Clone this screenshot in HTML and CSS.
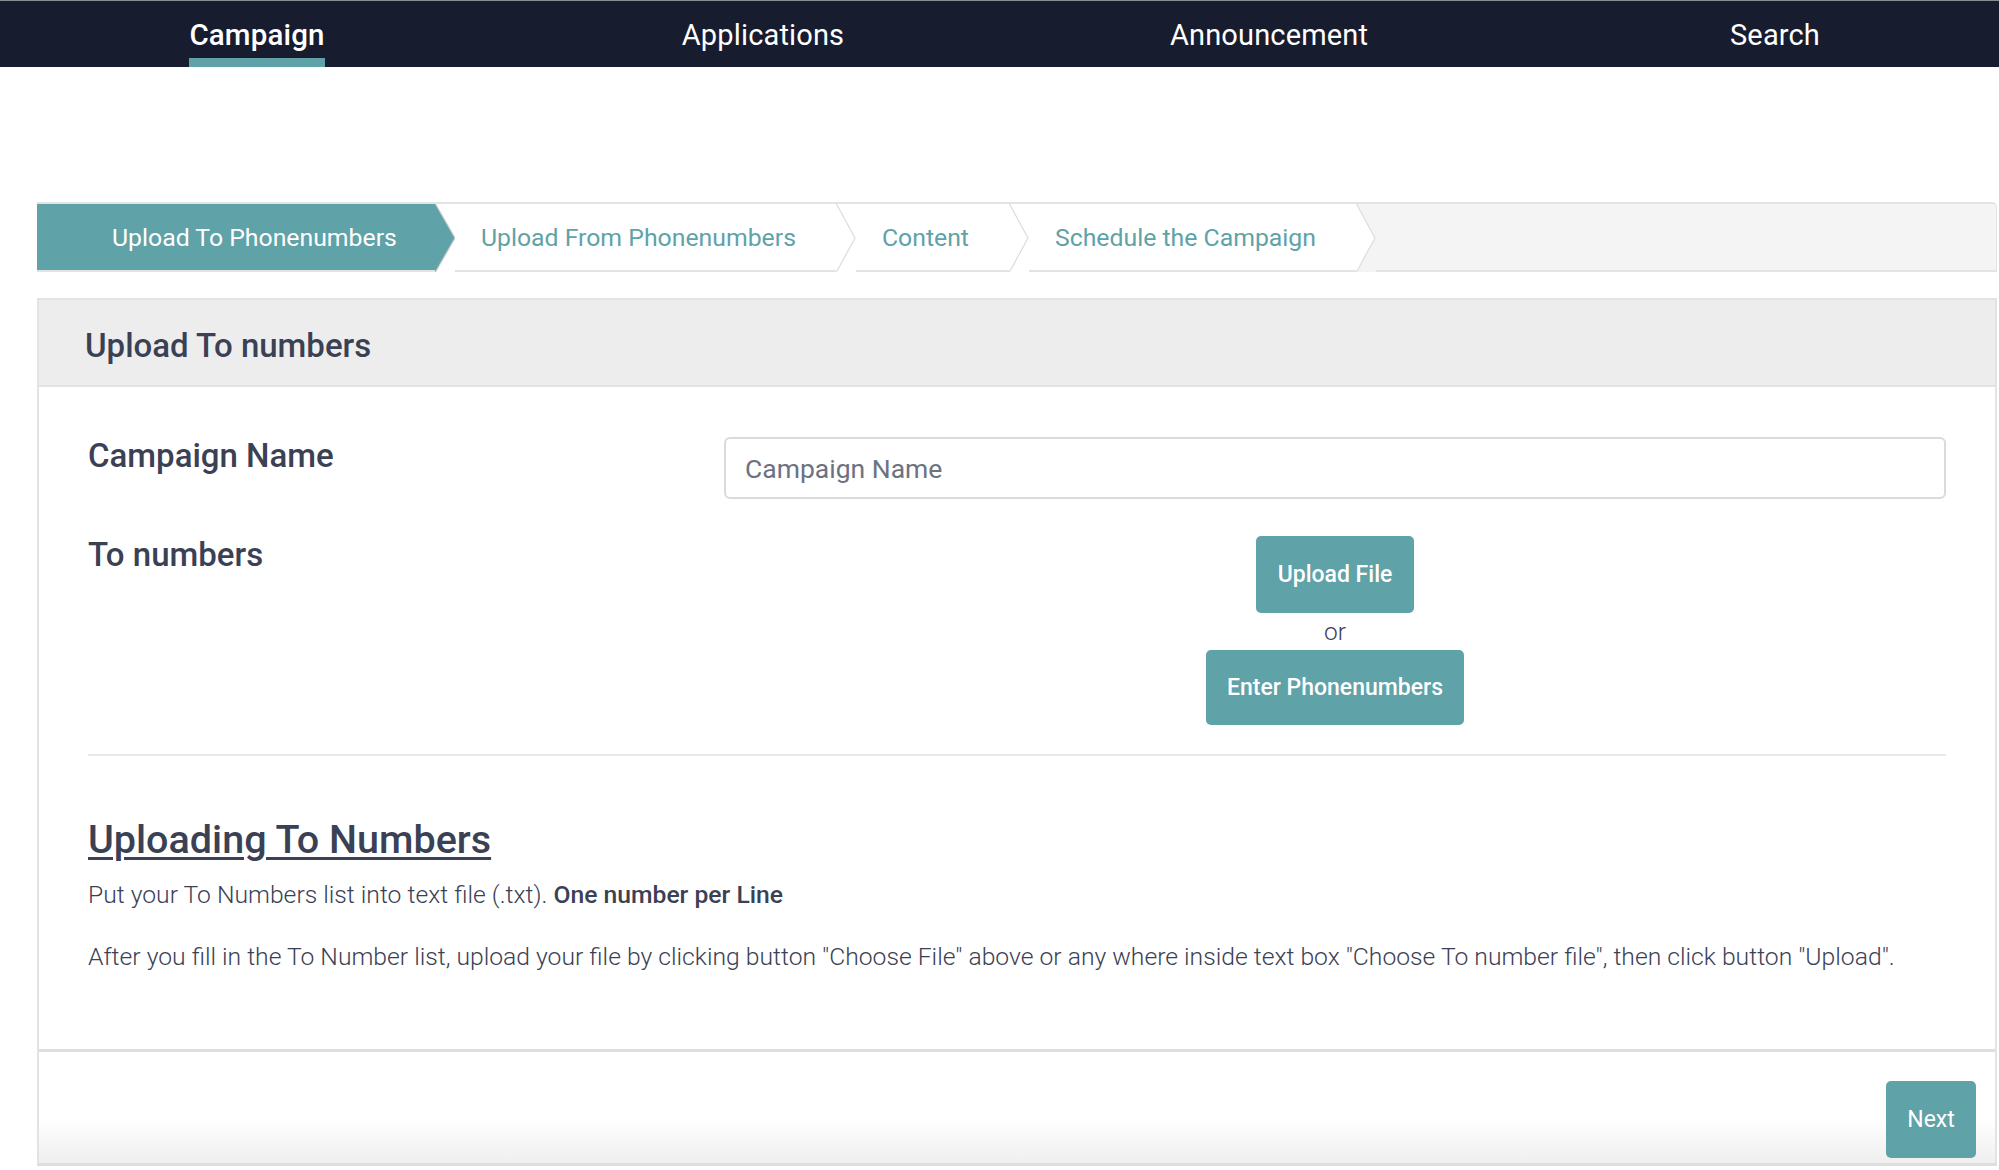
FILE: index.html
```html
<!DOCTYPE html>
<html lang="en">
<head>
<meta charset="utf-8">
<title>Campaign</title>
<link rel="stylesheet" href="styles.css">
</head>
<body>
<nav class="topnav">
  <div class="nav-item"><a class="nav-link active">Campaign</a></div>
  <div class="nav-item"><a class="nav-link">Applications</a></div>
  <div class="nav-item"><a class="nav-link">Announcement</a></div>
  <div class="nav-item"><a class="nav-link">Search</a></div>
</nav>

<main class="page">
  <div class="stepper">
    <div class="step step-active step-first">
      <span class="step-label">Upload To Phonenumbers</span>
      <svg class="chev chev-next-white" width="20" height="68" viewBox="0 0 20 68" preserveAspectRatio="none">
        <polygon points="0,0 0.5,0 20,34 0.5,68 0,68" fill="#5fa2a8"/>
        <polyline points="0.5,0 20,34 0.5,68" fill="none" stroke="#c9cccc" stroke-width="1.2"/>
      </svg>
    </div>
    <div class="step">
      <span class="step-label">Upload From Phonenumbers</span>
      <svg class="chev chev-next-white" width="20" height="68" viewBox="0 0 20 68" preserveAspectRatio="none">
        <polyline points="0.5,0 19,34 0.5,68" fill="none" stroke="#dcdcdc" stroke-width="1.2"/>
      </svg>
    </div>
    <div class="step">
      <span class="step-label">Content</span>
      <svg class="chev chev-next-white" width="20" height="68" viewBox="0 0 20 68" preserveAspectRatio="none">
        <polyline points="0.5,0 19,34 0.5,68" fill="none" stroke="#dcdcdc" stroke-width="1.2"/>
      </svg>
    </div>
    <div class="step">
      <span class="step-label">Schedule the Campaign</span>
      <svg class="chev chev-next-grey" width="20" height="68" viewBox="0 0 20 68" preserveAspectRatio="none">
        <polygon points="0,0 0.5,0 19,34 0.5,68 0,68" fill="#ffffff"/>
        <polyline points="0.5,0 19,34 0.5,68" fill="none" stroke="#dcdcdc" stroke-width="1.2"/>
      </svg>
    </div>
  </div>

  <section class="panel">
    <header class="panel-head">
      <h2 class="panel-title">Upload To numbers</h2>
    </header>
    <div class="panel-body">
      <div class="form-grid">
        <label class="form-label">Campaign Name</label>
        <div class="form-field">
          <input class="text-input" type="text" placeholder="Campaign Name">
        </div>
        <label class="form-label">To numbers</label>
        <div class="form-field actions">
          <button class="btn btn-upload">Upload File</button>
          <span class="or">or</span>
          <button class="btn btn-enter">Enter Phonenumbers</button>
        </div>
      </div>
      <hr class="divider">
      <h3 class="help-title">Uploading To Numbers</h3>
      <p class="help-text">Put your To Numbers list into text file (.txt). <strong>One number per Line</strong></p>
      <p class="help-text help-second">After you fill in the To Number list, upload your file by clicking button "Choose File" above or any where inside text box "Choose To number file", then click button "Upload".</p>
    </div>
    <footer class="panel-foot">
      <button class="btn btn-next">Next</button>
    </footer>
  </section>
</main>
</body>
</html>
```
FILE: styles.css
```css
* { box-sizing: border-box; }
html, body { margin: 0; padding: 0; }
body {
  font-family: Roboto, "Liberation Sans", Arial, sans-serif;
  color: #3b4155;
  background: #ffffff;
  overflow: hidden;
}

/* top navigation */
.topnav {
  display: flex;
  height: 67px;
  background: #181c2f;
  border-top: 1px solid #8a8c93;
  padding-left: 4px;
  overflow: hidden;
}
.nav-item {
  flex: 0 0 506px;
  display: flex;
  justify-content: center;
}
.nav-link {
  display: flex;
  align-items: center;
  padding-top: 10px;
  border-bottom: 9px solid transparent;
  color: #ffffff;
  font-size: 29px;
  font-weight: 400;
  letter-spacing: 0.15px;
}
.nav-link.active {
  font-weight: 500;
  font-size: 29.5px;
  border-bottom-color: #5fa2a8;
}

/* page */
.page {
  padding: 135px 2px 0 37px;
}

/* stepper */
.stepper {
  display: flex;
  height: 70px;
  background: #f4f4f4;
  border-top: 2px solid #e3e3e3;
  border-bottom: 2px solid #e3e3e3;
  border-right: 1px solid #e3e3e3;
  border-top-right-radius: 5px;
  margin-bottom: 26px;
}
.step {
  display: flex;
  align-items: stretch;
  background: #ffffff;
}
.step-label {
  display: flex;
  align-items: center;
  padding: 0 40px 0 26px;
  font-size: 24.8px;
  color: #5fa2a8;
  white-space: nowrap;
}
.step-first .step-label { padding: 0 38px 0 75px; }
.step-active .step-label {
  background: #5fa2a8;
  color: #ffffff;
}
.chev { display: block; flex: none; }
.chev-next-white { background: #ffffff; }
.chev-next-grey { background: #f4f4f4; }

/* panel */
.panel {
  border: 2px solid #e3e3e3;
  border-bottom: 3px solid #dedede;
}
.panel-head {
  height: 87px;
  background: #ededed;
  border-bottom: 2px solid #e2e2e2;
  display: flex;
  align-items: center;
  padding: 5px 0 0 46px;
}
.panel-title {
  margin: 0;
  font-size: 33px;
  font-weight: 500;
  color: #3b4155;
}
.panel-body {
  padding: 50px 49px 74px 49px;
}
.form-grid {
  display: grid;
  grid-template-columns: 636px 1fr;
  row-gap: 37px;
  align-items: start;
}
.form-label {
  font-size: 33px;
  font-weight: 500;
  line-height: 1.172;
  color: #3b4155;
}
.text-input {
  display: block;
  width: 100%;
  height: 62px;
  border: 2px solid #dadada;
  border-radius: 6px;
  padding: 0 19px;
  font-family: inherit;
  font-size: 26.5px;
  color: #3b4155;
  outline: none;
}
.text-input::placeholder { color: #6d7280; }
.actions {
  display: flex;
  flex-direction: column;
  align-items: center;
}
.btn {
  font-family: inherit;
  border: none;
  background: #5fa2a8;
  color: #ffffff;
  border-radius: 5px;
  font-size: 23px;
  font-weight: 500;
  cursor: pointer;
}
.btn-upload { height: 77px; padding: 0 22px; }
.btn-enter { height: 75px; padding: 0 21px; }
.or {
  display: block;
  height: 37px;
  line-height: 37px;
  font-size: 24.5px;
  font-weight: 300;
  color: #3b4155;
}
.divider {
  margin: 29px 0 0 0;
  border: none;
  border-top: 2px solid #e9e9e9;
  height: 0;
}
.help-title {
  margin: 60px 0 0 0;
  font-size: 39.5px;
  font-weight: 500;
  line-height: 48px;
  text-decoration: underline;
  text-decoration-thickness: 3px;
  text-underline-offset: 4px;
  color: #3b4155;
}
.help-text {
  margin: 13px 0 0 0;
  font-size: 24.7px;
  font-weight: 300;
  line-height: 36px;
  color: #3b4155;
}
.help-text strong { font-weight: 500; }
.help-second { margin-top: 26px; }

.panel-foot {
  border-top: 3px solid #dedede;
  height: 114px;
  display: flex;
  justify-content: flex-end;
  align-items: flex-start;
  padding: 29px 19px 0 0;
  background: linear-gradient(#ffffff 60%, #efefef 100%);
}
.btn-next {
  width: 90px;
  height: 77px;
  font-weight: 400;
}
```
